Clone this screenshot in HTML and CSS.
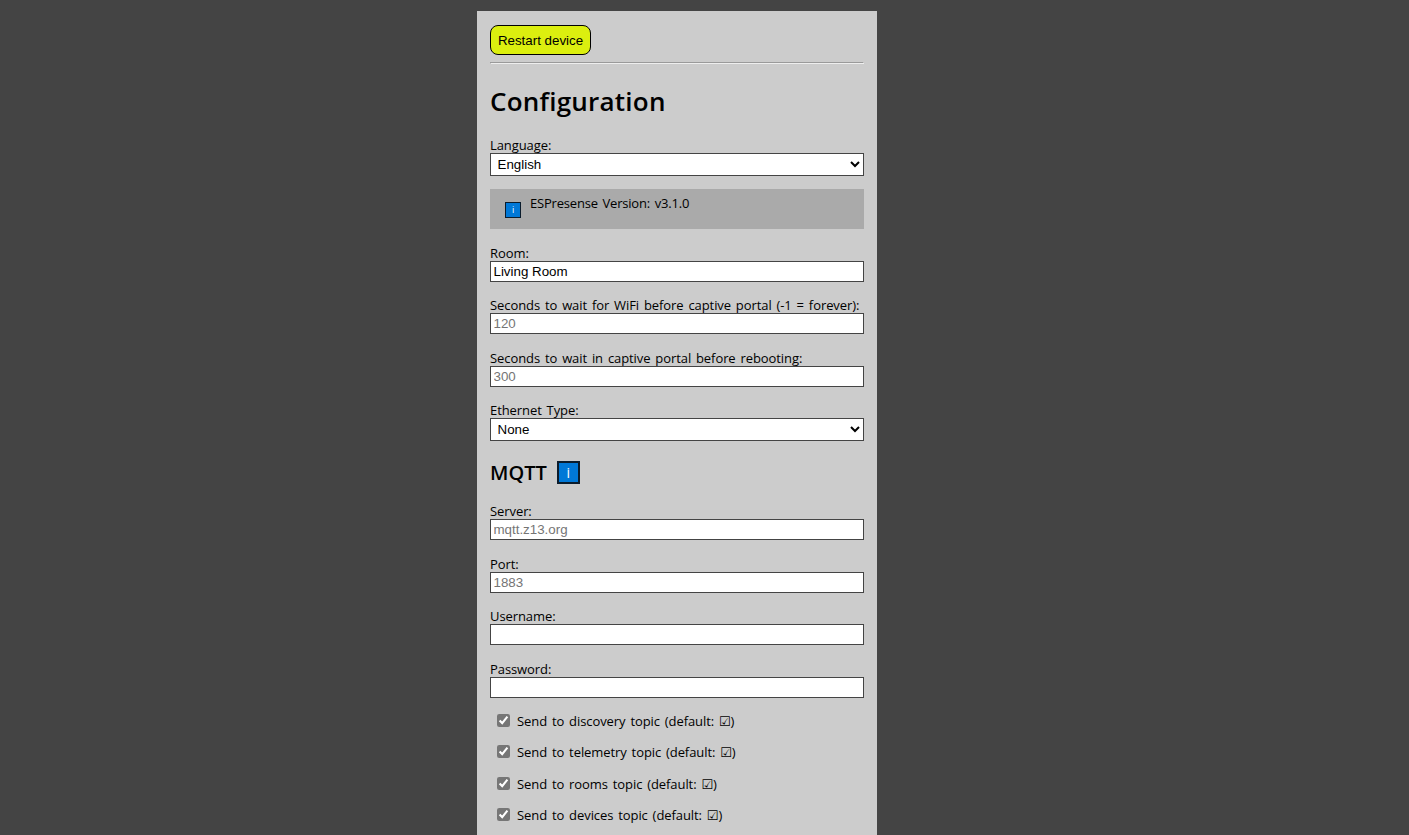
FILE: index.html
```html
<!DOCTYPE html>
<html lang="en">
<head>
    <meta charset="UTF-8">
    <meta name="viewport" content="width=device-width, initial-scale=1.0">
    <title>ESPresense</title>
    <link rel="stylesheet" href="styles.css">
</head>
<body>
    <div class="container">
        <button class="restart" type="button">Restart device</button>
        <hr>
        <h1>Configuration</h1>
        <form>
            <div class="field">
                <label for="language">Language:</label>
                <select id="language"><option>English</option></select>
            </div>
            <div class="version">
                <span class="info info-small">i</span>
                <span>ESPresense Version: v3.1.0</span>
            </div>
            <div class="field">
                <label for="room">Room:</label>
                <input id="room" type="text" value="Living Room">
            </div>
            <div class="field">
                <label for="wifi_timeout">Seconds to wait for WiFi before captive portal (-1 = forever):</label>
                <input id="wifi_timeout" type="text" placeholder="120">
            </div>
            <div class="field">
                <label for="portal_timeout">Seconds to wait in captive portal before rebooting:</label>
                <input id="portal_timeout" type="text" placeholder="300">
            </div>
            <div class="field">
                <label for="eth">Ethernet Type:</label>
                <select id="eth"><option>None</option></select>
            </div>
            <h2>MQTT <span class="info">i</span></h2>
            <div class="field">
                <label for="mqtt_host">Server:</label>
                <input id="mqtt_host" type="text" placeholder="mqtt.z13.org">
            </div>
            <div class="field">
                <label for="mqtt_port">Port:</label>
                <input id="mqtt_port" type="text" placeholder="1883">
            </div>
            <div class="field">
                <label for="mqtt_user">Username:</label>
                <input id="mqtt_user" type="text">
            </div>
            <div class="field">
                <label for="mqtt_pass">Password:</label>
                <input id="mqtt_pass" type="password">
            </div>
            <div class="checks">
                <label class="check"><input type="checkbox" checked><span>Send to discovery topic (default: <span class="tick">☑</span>)</span></label>
                <label class="check"><input type="checkbox" checked><span>Send to telemetry topic (default: <span class="tick">☑</span>)</span></label>
                <label class="check"><input type="checkbox" checked><span>Send to rooms topic (default: <span class="tick">☑</span>)</span></label>
                <label class="check"><input type="checkbox" checked><span>Send to devices topic (default: <span class="tick">☑</span>)</span></label>
            </div>
        </form>
    </div>
</body>
</html>
```
FILE: styles.css
```css
* {
    box-sizing: border-box;
}
html {
    height: 100%;
    overflow: hidden;
}
body {
    height: 100%;
    margin: 0;
    padding: 11px 0 0 477px;
    overflow: hidden;
    background-color: #444;
    color: #000;
    font-family: "Open Sans", "Noto Sans", sans-serif;
    font-size: 13px;
    line-height: 17px;
}
.container {
    width: 400px;
    min-height: 860px;
    padding: 14px 13px;
    background-color: #ccc;
}
.restart {
    display: block;
    width: 101px;
    height: 30px;
    padding: 0;
    border: 1px solid #000;
    border-radius: 8px;
    background-color: #dcef0f;
    color: #000;
    font: 13.3333px "Liberation Sans", Arial, sans-serif;
}
hr {
    margin: 7px 0 0;
    border: 1px inset #eee;
}
h1 {
    margin: 18px 0 16px;
    font-size: 26px;
    font-weight: 650;
    line-height: 38px;
    letter-spacing: 0.23px;
}
h2 {
    display: flex;
    align-items: center;
    gap: 10px;
    height: 24px;
    margin: 19px 0 18px;
    font-size: 20px;
    font-weight: 650;
}
.field {
    display: flex;
    flex-direction: column;
    margin-bottom: 14.5px;
}
.field label {
    height: 17px;
    padding-top: 1px;
    white-space: nowrap;
    letter-spacing: -0.08px;
    word-spacing: 1.6px;
}
.field input,
.field select {
    width: 100%;
    height: 21px;
    padding: 1px 2.5px;
    border: 1px solid #444;
    border-radius: 0;
    background-color: #fff;
    color: #000;
    font: 13.3333px "Liberation Sans", Arial, sans-serif;
}
.field select {
    height: 23px;
}
.field input::placeholder {
    color: #757575;
}
.version {
    display: flex;
    gap: 9px;
    height: 40px;
    margin: -2px 0 15px;
    padding: 6px 15px;
    background-color: #aaa;
    letter-spacing: -0.2px;
    word-spacing: 1.6px;
}
.info {
    display: flex;
    align-items: center;
    justify-content: center;
    width: 23px;
    height: 23px;
    border: 2px solid #0b1c2c;
    background-color: #0078d7;
    color: #fff;
    font-size: 14px;
    font-weight: normal;
}
.info-small {
    width: 16px;
    height: 16px;
    margin-top: 7px;
    border-width: 1px;
    font-size: 9px;
}
.checks {
    display: flex;
    flex-direction: column;
    gap: 14.33px;
}
.check {
    display: flex;
    align-items: center;
    height: 17px;
    letter-spacing: -0.08px;
    word-spacing: 1.6px;
}
.check > span {
    padding-top: 2px;
}
.check input {
    width: 13px;
    height: 13px;
    margin: 0 7px;
    accent-color: #767676;
}
.tick {
    font-family: "DejaVu Sans", sans-serif;
    font-size: 13px;
}
```
